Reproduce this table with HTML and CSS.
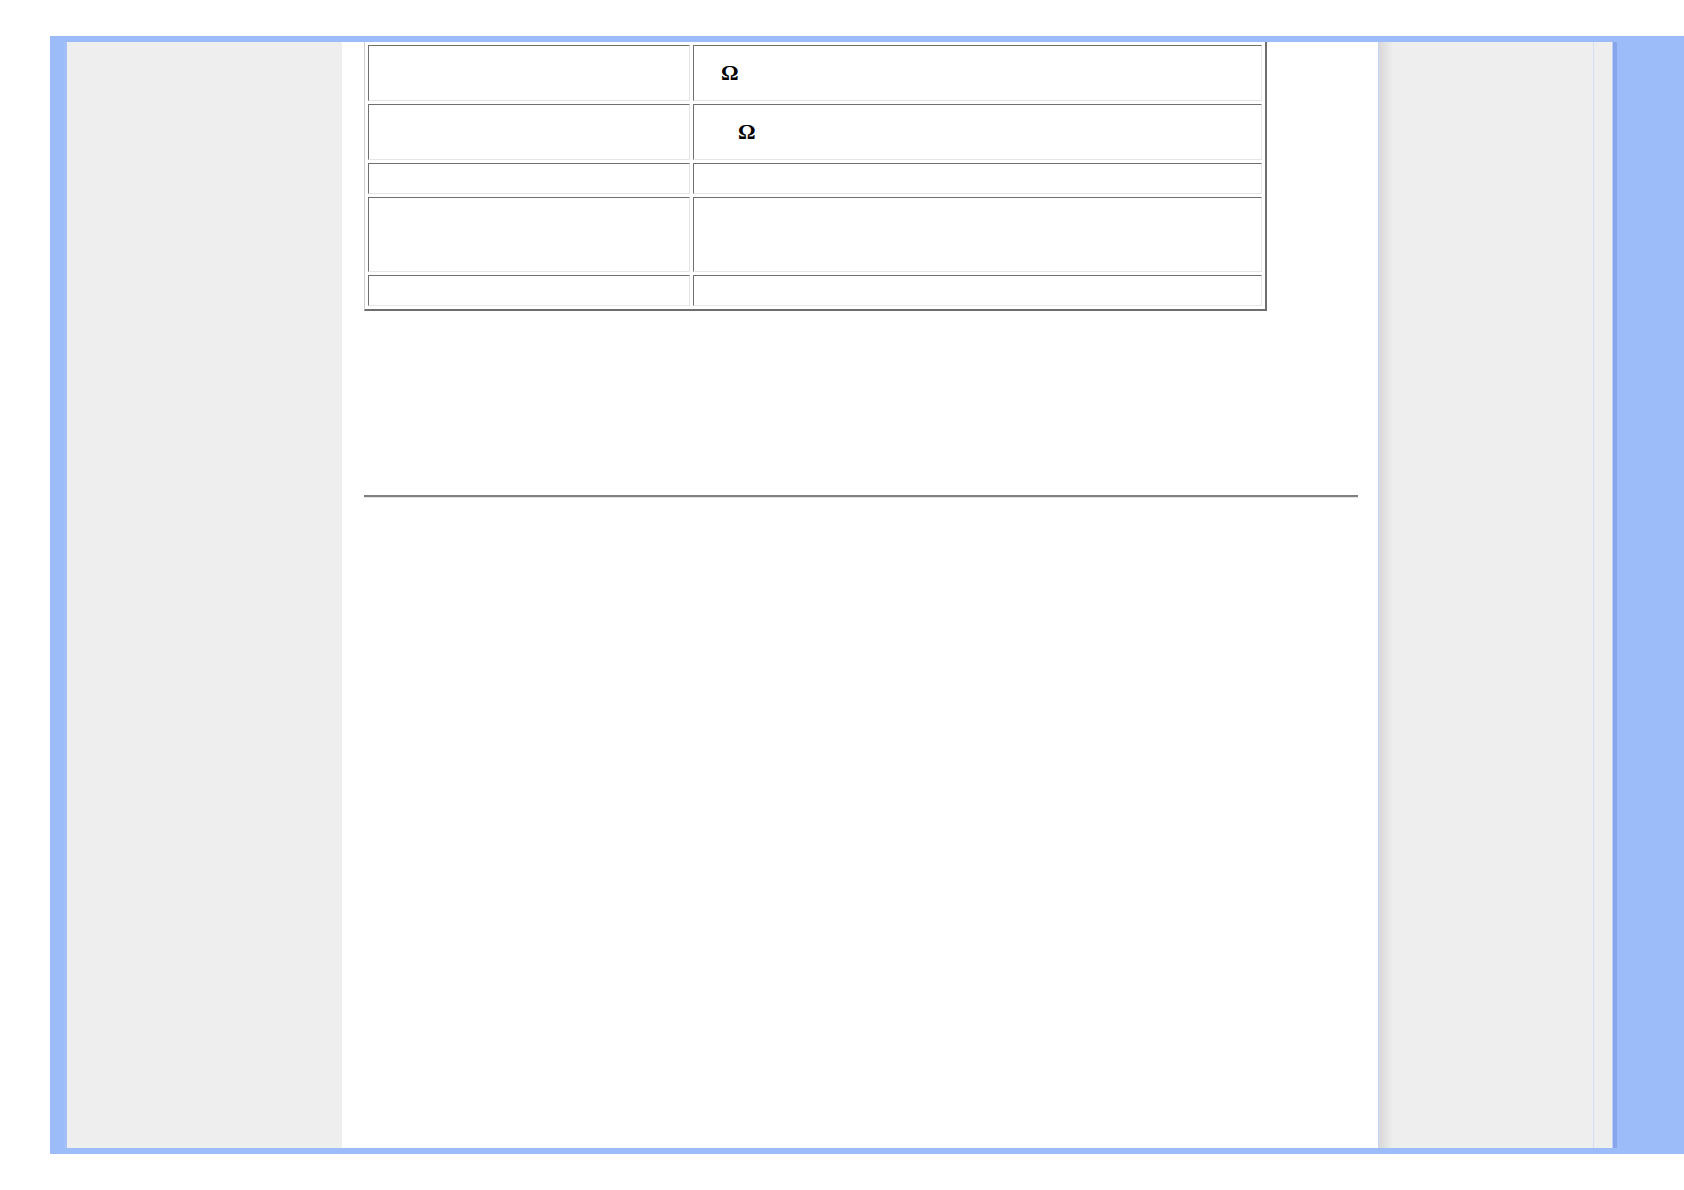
FILE: index.html
```html
<!DOCTYPE html>
<html lang="en">
  <head>
    <meta charset="UTF-8" />
    <title>Specifications</title>
    <link rel="stylesheet" href="styles.css">
  </head>
  <body>
    <div class="frame">
      <div class="edge"></div>
      <div class="nav"></div>

      <div class="main">
        <table class="spec">
          <colgroup>
            <col class="col-name" />
            <col class="col-value" />
          </colgroup>
          <tr class="row-tall">
            <td></td>
            <td><b class="ohm ohm-a">&Omega;</b></td>
          </tr>
          <tr class="row-tall">
            <td></td>
            <td><b class="ohm ohm-b">&Omega;</b></td>
          </tr>
          <tr class="row-short">
            <td></td>
            <td></td>
          </tr>
          <tr class="row-mid">
            <td></td>
            <td></td>
          </tr>
          <tr class="row-short">
            <td></td>
            <td></td>
          </tr>
        </table>

        <hr class="rule" />
      </div>

      <div class="side"></div>
      <div class="side-strip"></div>
      <div class="shade"></div>
    </div>
  </body>
</html>
```

FILE: styles.css
```css
body {
  font-family: "Liberation Serif", serif;
  background-color: #fff;
  color: #000;
  margin: 0;
}
.frame {
  display: flex;
  margin: 36px 0 0 50px;
  width: 1634px;
  height: 1118px;
  padding: 6px 0;
  box-sizing: border-box;
  background-color: #9bbcf9;
}
.edge {
  width: 14px;
  border-right: 3px solid #a3c0fa;
}
.nav {
  width: 275px;
  background-color: #eeeeee;
}
.main {
  width: 1036px;
  padding: 0 20px 0 22px;
  box-sizing: border-box;
  background-color: #fff;
  overflow: hidden;
}
.side {
  width: 216px;
  box-sizing: border-box;
  border-left: 1px solid #c3d3f5;
  border-right: 1px solid #d3dcf0;
  background: linear-gradient(to right, #d8d8d8, #eeeeee 14px);
}
.side-strip {
  width: 19px;
  box-sizing: border-box;
  border-right: 1px solid #bccff6;
  background-color: #eeeeee;
}
.shade {
  width: 4px;
  background-color: #86a5ea;
}

/* spec table */
.spec {
  margin-top: -1px;
  width: 903px;
  table-layout: fixed;
  border-collapse: separate;
  border-spacing: 3px;
  border-top: 1px solid #e2e2e2;
  border-left: 1px solid #d0d0d0;
  border-right: 2px solid #6e6e6e;
  border-bottom: 2px solid #6e6e6e;
}
.col-name {
  width: 322px;
}
.col-value {
  width: 569px;
}
.spec td {
  box-sizing: border-box;
  padding: 1px;
  border-top: 1px solid #6f6f6f;
  border-left: 1px solid #6f6f6f;
  border-right: 1px solid #e6e6e6;
  border-bottom: 1px solid #e6e6e6;
  vertical-align: middle;
}
.row-tall td {
  height: 56px;
}
.row-short td {
  height: 31px;
}
.row-mid td {
  height: 75px;
}
.ohm {
  font-size: 22px;
  font-weight: bold;
  line-height: 24px;
}
.ohm-a {
  margin-left: 26px;
}
.ohm-b {
  margin-left: 43px;
}
.rule {
  height: 0;
  margin: 184px 0 0;
  border: 0;
  border-top: 2px solid #808080;
  border-bottom: 1px solid #e4e4e4;
}
```
